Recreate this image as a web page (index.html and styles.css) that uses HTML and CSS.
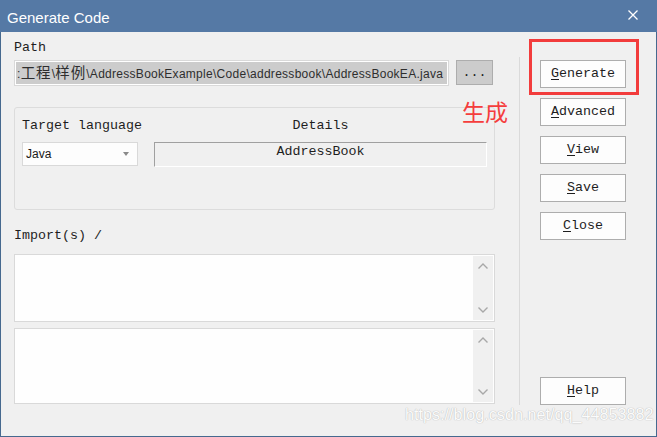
FILE: index.html
```html
<!DOCTYPE html>
<html>
<head>
<meta charset="utf-8">
<link rel="stylesheet" href="styles.css">
</head>
<body>
<div class="window">
  <div class="titlebar">
    <span class="title">Generate Code</span>
    <svg class="close" width="10" height="10" viewBox="0 0 10 10"><path d="M0.5 0.5 L9.5 9.5 M9.5 0.5 L0.5 9.5" stroke="#fff" stroke-width="1.3" fill="none"/></svg>
  </div>
  <div class="body">
    <div class="main">
      <div class="label">Path</div>
      <div class="path-row">
        <div class="path-input"><div class="path-sel">:<span class="cjk">工程</span>\<span class="cjk">样例</span>\AddressBookExample\Code\addressbook\AddressBookEA.java</div></div>
        <div class="browse">...</div>
      </div>
      <div class="group">
        <div class="group-grid">
          <div class="label">Target language</div>
          <div class="label center">Details</div>
          <div class="combo"><span>Java</span><span class="arrow"></span></div>
          <div class="details">AddressBook</div>
        </div>
      </div>
      <div class="label import">Import(s) /</div>
      <div class="textbox tb1">
        <div class="scroll">
          <svg width="10" height="6" viewBox="0 0 10 6"><path d="M0.5 5.5 L5 1 L9.5 5.5" stroke="#a8a8a8" stroke-width="1.4" fill="none"/></svg>
          <svg width="10" height="6" viewBox="0 0 10 6"><path d="M0.5 0.5 L5 5 L9.5 0.5" stroke="#a8a8a8" stroke-width="1.4" fill="none"/></svg>
        </div>
      </div>
      <div class="textbox tb2">
        <div class="scroll">
          <svg width="10" height="6" viewBox="0 0 10 6"><path d="M0.5 5.5 L5 1 L9.5 5.5" stroke="#a8a8a8" stroke-width="1.4" fill="none"/></svg>
          <svg width="10" height="6" viewBox="0 0 10 6"><path d="M0.5 0.5 L5 5 L9.5 0.5" stroke="#a8a8a8" stroke-width="1.4" fill="none"/></svg>
        </div>
      </div>
    </div>
    <div class="sep"></div>
    <div class="btncol">
      <div class="highlight"></div>
      <div class="btn"><u>G</u>enerate</div>
      <div class="btn"><u>A</u>dvanced</div>
      <div class="btn"><u>V</u>iew</div>
      <div class="btn"><u>S</u>ave</div>
      <div class="btn"><u>C</u>lose</div>
      <div class="btn help"><u>H</u>elp</div>
    </div>
  </div>
  <div class="note">生成</div>
  <div class="watermark">https://blog.csdn.net/qq_44853882</div>
</div>
</body>
</html>
```
FILE: styles.css
```css
html, body {
  margin: 0;
  padding: 0;
}
body {
  width: 657px;
  height: 437px;
  overflow: hidden;
  background: #f0f0f0;
}
.window {
  position: relative;
  width: 657px;
  height: 437px;
  box-sizing: border-box;
  border: 1px solid #46698f;
  border-top: 0;
  display: flex;
  flex-direction: column;
  background: #f0f0f0;
  font-family: "Liberation Mono", "Noto Sans CJK SC", monospace;
  font-size: 13.33px;
  color: #1e1e1e;
}
.titlebar {
  height: 32px;
  flex: none;
  margin: 0 -1px;
  background: #5579a5;
  display: flex;
  align-items: flex-start;
  justify-content: space-between;
  padding: 3px 0 0 7px;
  box-sizing: border-box;
}
.title {
  font-family: "Liberation Sans", Arial, sans-serif;
  font-size: 15px;
  line-height: 29px;
  color: #ffffff;
}
.close {
  margin: 7px 19px 0 0;
}
.body {
  flex: 1;
  display: flex;
  align-items: flex-start;
  padding: 8px 0 0 13px;
}
.main {
  width: 481px;
  flex: none;
}
.label {
  line-height: 16px;
  height: 16px;
  white-space: nowrap;
}
.center {
  text-align: center;
}
.path-row {
  display: flex;
  align-items: flex-start;
  margin-top: 4px;
}
.path-input {
  width: 435px;
  height: 26px;
  box-sizing: border-box;
  border: 1px solid #d9d9d9;
  background: #ffffff;
  padding: 1px;
}
.path-sel {
  height: 22px;
  background: #cccccc;
  overflow: hidden;
  white-space: nowrap;
  font-family: "Liberation Sans", Arial, sans-serif;
  font-size: 12px;
  line-height: 22px;
  letter-spacing: 0.28px;
  color: #2e2e2e;
  padding-left: 1px;
}
.cjk {
  font-family: "Noto Sans CJK SC", sans-serif;
  font-size: 14.5px;
  letter-spacing: 1px;
  line-height: 20px;
}
.browse {
  margin-left: 7px;
  width: 37px;
  height: 25px;
  box-sizing: border-box;
  border: 1px solid #adadad;
  background: #cccccc;
  text-align: center;
  line-height: 23px;
}
.group {
  margin-top: 21px;
  height: 103px;
  box-sizing: border-box;
  border: 1px solid #dcdcdc;
  border-radius: 3px;
  padding: 10px 7px 0 7px;
}
.group-grid {
  display: grid;
  grid-template-columns: 116px 1fr;
  column-gap: 16px;
  row-gap: 8px;
}
.combo {
  height: 24px;
  box-sizing: border-box;
  border: 1px solid #d9d9d9;
  background: #fdfdfd;
  display: flex;
  align-items: center;
  justify-content: space-between;
  padding: 0 8px 0 3px;
  font-family: "Liberation Sans", Arial, sans-serif;
  font-size: 12px;
  color: #1a1a1a;
}
.arrow {
  width: 0;
  height: 0;
  border-left: 3.5px solid transparent;
  border-right: 3.5px solid transparent;
  border-top: 4px solid #8a8a8a;
}
.details {
  height: 25px;
  box-sizing: border-box;
  border: 1px solid;
  border-color: #a0a0a0 #ffffff #ffffff #a0a0a0;
  text-align: center;
  line-height: 16px;
  padding-top: 1px;
}
.import {
  margin-top: 18px;
}
.textbox {
  margin-top: 10px;
  height: 68px;
  box-sizing: border-box;
  border: 1px solid #d9d9d9;
  background: #fefefe;
  display: flex;
  justify-content: flex-end;
  padding: 1px;
}
.tb2 {
  margin-top: 6px;
  height: 76px;
}
.scroll {
  width: 20px;
  background: #f0f0f0;
  display: flex;
  flex-direction: column;
  justify-content: space-between;
  align-items: center;
  padding: 7px 0;
}
.scroll svg {
  display: block;
}
.sep {
  flex: none;
  width: 1px;
  height: 348px;
  background: #dadada;
  margin: 17px 0 0 24px;
}
.btncol {
  position: relative;
  flex: none;
  margin: 20px 0 0 20px;
  width: 86px;
  height: 345px;
  display: flex;
  flex-direction: column;
}
.btn {
  height: 28px;
  box-sizing: border-box;
  border: 1px solid #adadad;
  background: #fdfdfd;
  text-align: center;
  line-height: 26px;
  margin-bottom: 10px;
  color: #1e1e1e;
}
.btn u {
  text-underline-offset: 2px;
}
.btn.help {
  margin-top: auto;
  margin-bottom: 0;
}
.highlight {
  position: absolute;
  left: -11px;
  top: -21px;
  width: 110px;
  height: 56px;
  box-sizing: border-box;
  border: 3px solid #f23c3c;
}
.note {
  position: absolute;
  left: 461px;
  top: 97px;
  font-family: "Noto Sans CJK SC", sans-serif;
  font-size: 23px;
  line-height: 28px;
  color: #f53d3d;
}
.watermark {
  position: absolute;
  left: 404px;
  top: 404px;
  font-family: "Liberation Sans", Arial, sans-serif;
  font-size: 16.2px;
  line-height: 20px;
  color: #fbfbfb;
  text-shadow: 0 0 1px #b8b8b8, 0 0 1px #c8c8c8;
  white-space: nowrap;
}
```
